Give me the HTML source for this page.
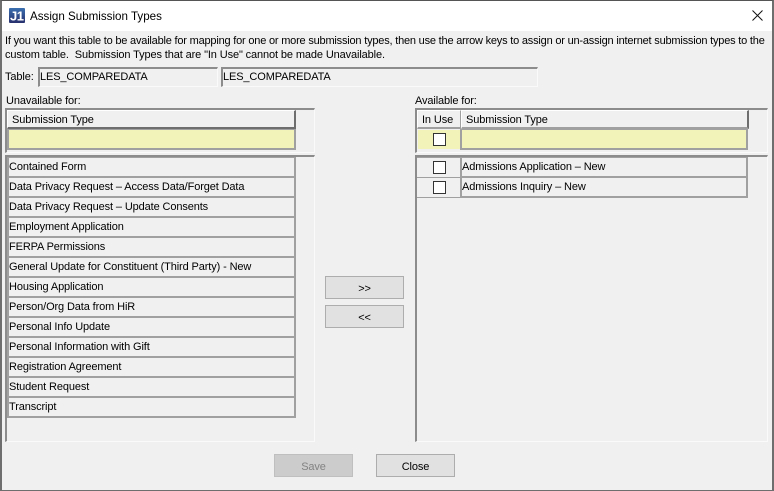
<!DOCTYPE html>
<html><head><meta charset="utf-8"><style>
html,body{margin:0;padding:0;width:774px;height:491px;overflow:hidden;background:#f0f0f0}
*{box-sizing:border-box}
div{position:absolute}
.t{font:11px/13px "Liberation Sans",sans-serif;letter-spacing:-.12px;color:#000;white-space:nowrap}
.sunk{border-top:2px solid #8c8c8c;border-left:2px solid #8c8c8c;border-right:1px solid #fafafa;border-bottom:1px solid #fafafa}
.row{left:7px;width:289px;height:20px;border:2px solid #a0a0a0;border-top:0;background:#f0f0f0;font:11px/13px "Liberation Sans",sans-serif;letter-spacing:-.12px;padding:3px 0 0 0;white-space:nowrap}
.rowr{left:460px;width:288px;height:20px;border:2px solid #a0a0a0;border-top:0;font:11px/13px "Liberation Sans",sans-serif;letter-spacing:-.12px;padding:3px 0 0 0;white-space:nowrap}
.cb{width:13px;height:13px;background:#fff;border:1px solid #333}
.btn{width:79px;height:23px;background:#e1e1e1;border:1px solid #adadad;font:11px/24px "Liberation Sans",sans-serif;letter-spacing:-.12px;text-align:center;color:#000}
</style></head><body>
<div style="left:0;top:0;width:774px;height:491px;border:2px solid #6e6e6e;border-top:1px solid #555;border-bottom:1px solid #6e6e6e"></div>
<div style="left:2px;top:1px;width:770px;height:30px;background:#fff"></div>
<svg style="position:absolute;left:9px;top:8px" width="16" height="15" viewBox="0 0 16 15"><defs><linearGradient id="g" x1="0" y1="0" x2="0" y2="1"><stop offset="0" stop-color="#3a6fb0"/><stop offset="1" stop-color="#28306e"/></linearGradient></defs><rect width="16" height="15" rx="1" fill="url(#g)"/><text x="1" y="12.500" font-family="Liberation Sans" font-weight="bold" font-size="13" letter-spacing="-.5" fill="#fff">J1</text></svg>
<div class="t" style="left:30px;top:9px;font-size:11.6px;letter-spacing:0;line-height:15px">Assign Submission Types</div>
<svg style="position:absolute;left:752px;top:10px" width="11" height="11"><path d="M.5.5l10 10M10.500.5l-10 10" stroke="#111" fill="none"/></svg>

<div class="t" style="left:5px;top:35px;letter-spacing:-.2px">If you want this table to be available for mapping for one or more submission types, then use the arrow keys to assign or un-assign internet submission types to the</div>
<div class="t" style="left:5px;top:49px;white-space:pre">custom table.  Submission Types that are "In Use" cannot be made Unavailable.</div>

<div class="t" style="left:5px;top:71px">Table:</div>
<div class="sunk t" style="left:38px;top:67px;width:180px;height:20px;padding:2px 0 0 0">LES_COMPAREDATA</div>
<div class="sunk t" style="left:221px;top:67px;width:317px;height:20px;padding:2px 0 0 0">LES_COMPAREDATA</div>

<div class="t" style="left:6px;top:95px">Unavailable for:</div>
<div class="t" style="left:415px;top:95px">Available for:</div>

<!-- left header -->
<div class="sunk" style="left:5px;top:108px;width:310px;height:45px"></div>
<div style="left:7px;top:110px;width:289px;height:19px;border:1px solid #fff;border-right:2px solid #6e6e6e;border-bottom:2px solid #6e6e6e"></div>
<div class="t" style="left:12px;top:114px">Submission Type</div>
<div style="left:7px;top:129px;width:289px;height:21px;background:#f2f3b8;border:2px solid #a0a0a0;border-top-width:1px"></div>
<div class="sunk" style="left:5px;top:155px;width:310px;height:287px"></div>
<div style="left:7px;top:157px;width:289px;height:1px;background:#a0a0a0"></div>

<div class="row" style="top:158px">Contained Form</div>
<div class="row" style="top:178px">Data Privacy Request – Access Data/Forget Data</div>
<div class="row" style="top:198px">Data Privacy Request – Update Consents</div>
<div class="row" style="top:218px">Employment Application</div>
<div class="row" style="top:238px">FERPA Permissions</div>
<div class="row" style="top:258px">General Update for Constituent (Third Party) - New</div>
<div class="row" style="top:278px">Housing Application</div>
<div class="row" style="top:298px">Person/Org Data from HiR</div>
<div class="row" style="top:318px">Personal Info Update</div>
<div class="row" style="top:338px">Personal Information with Gift</div>
<div class="row" style="top:358px">Registration Agreement</div>
<div class="row" style="top:378px">Student Request</div>
<div class="row" style="top:398px">Transcript</div>

<!-- right header -->
<div class="sunk" style="left:415px;top:108px;width:353px;height:45px"></div>
<div style="left:417px;top:110px;width:44px;height:19px;border:1px solid #fff;border-right:1px solid #a0a0a0;border-bottom:2px solid #a0a0a0"></div>
<div class="t" style="left:422px;top:114px">In Use</div>
<div style="left:461px;top:110px;width:288px;height:19px;border:1px solid #fff;border-right:2px solid #6e6e6e;border-bottom:2px solid #a0a0a0"></div>
<div class="t" style="left:466px;top:114px">Submission Type</div>
<div style="left:418px;top:130px;width:42px;height:19px;background:#f2f3b8"></div>
<div class="cb" style="left:433px;top:133px"></div>
<div style="left:460px;top:129px;width:288px;height:21px;background:#f2f3b8;border:2px solid #a0a0a0;border-top-width:1px"></div>
<div class="sunk" style="left:415px;top:155px;width:353px;height:287px"></div>

<div style="left:417px;top:157px;width:331px;height:1px;background:#a0a0a0"></div>
<div style="left:417px;top:177px;width:43px;height:1px;background:#a0a0a0"></div>
<div style="left:417px;top:197px;width:43px;height:1px;background:#a0a0a0"></div>
<div class="cb" style="left:433px;top:161px"></div>
<div class="cb" style="left:433px;top:181px"></div>
<div class="rowr" style="top:158px">Admissions Application – New</div>
<div class="rowr" style="top:178px">Admissions Inquiry – New</div>

<div class="btn" style="left:325px;top:276px">&gt;&gt;</div>
<div class="btn" style="left:325px;top:305px">&lt;&lt;</div>
<div class="btn" style="left:274px;top:454px;background:#cccccc;border-color:#bfbfbf;color:#838383">Save</div>
<div class="btn" style="left:376px;top:454px">Close</div>
</body></html>
